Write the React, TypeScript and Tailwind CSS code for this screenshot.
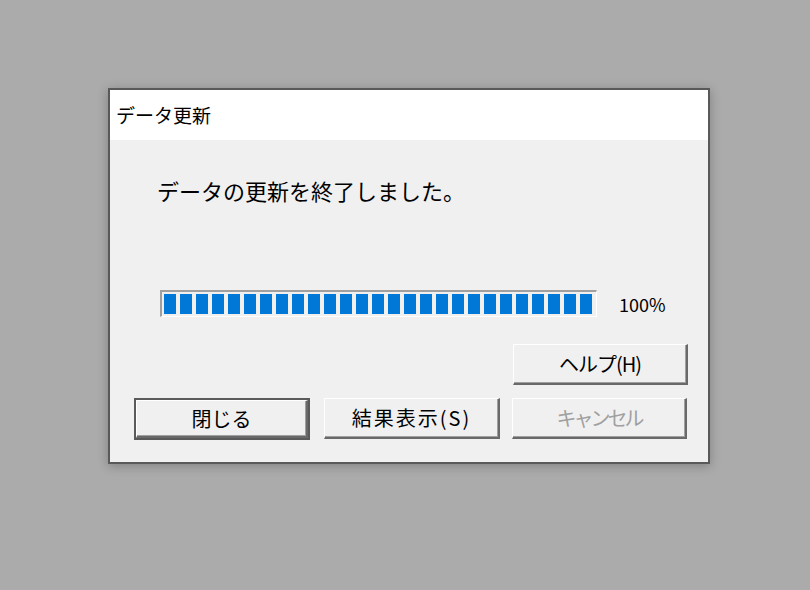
const font = "font-['MS_UI_Gothic','Noto_Sans_CJK_JP',sans-serif]";

function Btn({ label, def, disabled, className = "", textClass = "" }: { label: string; def?: boolean; disabled?: boolean; className?: string; textClass?: string }) {
  return (
    <div className={`${def ? "border-2 border-[#5a5a5a]" : ""} ${className}`}>
      <button
        className={`flex h-full w-full items-center justify-center border-t border-l border-t-white border-l-white border-r-2 border-b-2 border-r-[#696969] border-b-[#696969] bg-[#f0f0f0] shadow-[inset_-1px_-1px_0_#a0a0a0] text-[20px] leading-none ${disabled ? "text-[#a0a0a0]" : "text-black"} ${textClass}`}
      >
        {label}
      </button>
    </div>
  );
}

export default function App() {
  return (
    <div className={`h-[590px] w-[810px] bg-[#ababab] pl-[108px] pt-[88px] ${font}`}>
      <div className="flex h-[376px] w-[602px] flex-col border-2 border-[#595959] bg-[#f0f0f0] shadow-[0_2px_10px_rgba(0,0,0,0.25)]">
        <div className="flex h-[50px] items-center bg-white pl-[6px] text-[19px] text-black">データ更新</div>
        <div className="flex flex-col pl-[24px]">
          <p className="mt-[38px] ml-[23px] text-[22px] leading-[24px] text-black">データの更新を終了しました。</p>
          <div className="mt-[88px] ml-[26px] flex items-center">
            <div className="flex h-[27px] w-[437px] items-start gap-[4px] border-t-2 border-l-2 border-t-[#a0a0a0] border-l-[#a0a0a0] border-r border-b border-r-white border-b-white pt-[2px] pl-[2px]">
              {Array.from({ length: 27 }).map((_, i) => (
                <div key={i} className="h-[20px] w-[12px] bg-[#0078d7]" />
              ))}
            </div>
            <span className="ml-[22px] text-[18px] leading-none text-black">100%</span>
          </div>
          <div className="mt-[27px] flex justify-end pr-[20px]">
            <Btn label="ヘルプ(H)" className="h-[41px] w-[175px]" textClass="tracking-[-1px]" />
          </div>
          <div className="mt-[13px] flex gap-[14px]">
            <Btn label="閉じる" def className="h-[42px] w-[176px]" />
            <Btn label="結果表示(S)" className="h-[41px] w-[176px]" textClass="tracking-[2px]" />
            <Btn label="キャンセル" disabled className="-ml-[2px] h-[41px] w-[175px]" textClass="tracking-[-3px]" />
          </div>
        </div>
      </div>
    </div>
  );
}
